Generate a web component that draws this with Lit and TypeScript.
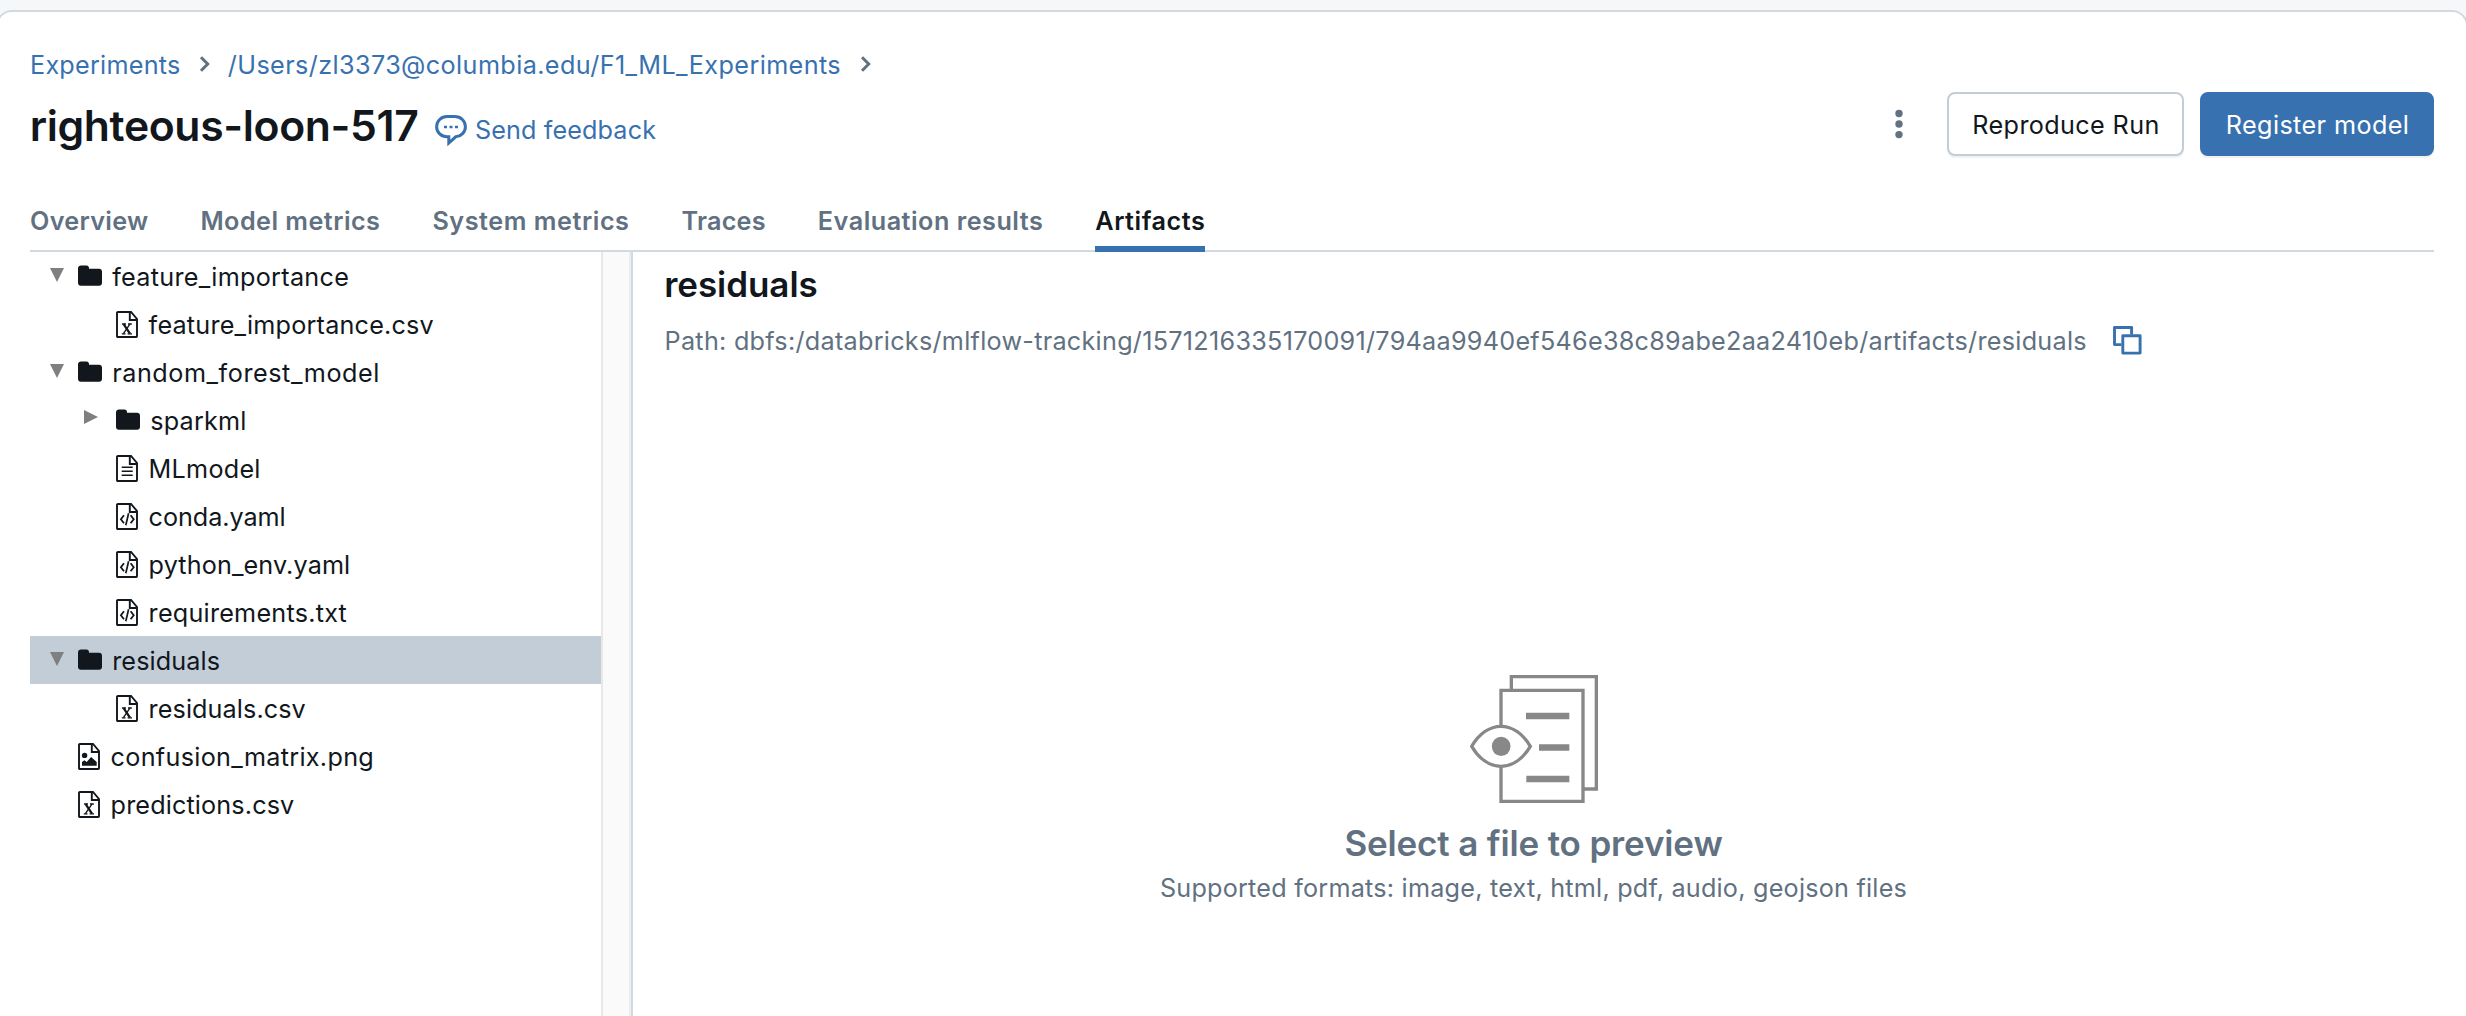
import { LitElement, html, css, svg } from "lit";
import { customElement, property, state } from "lit/decorators.js";

type Kind = "folder" | "sheet" | "text" | "code" | "image";

interface Node {
  name: string;
  kind: Kind;
  depth: number;
  tracking: number;
  open?: boolean;
}

interface Tab {
  label: string;
  tracking: number;
}

const TABS: Tab[] = [
  { label: "Overview", tracking: 0.3 },
  { label: "Model metrics", tracking: 0.467 },
  { label: "System metrics", tracking: 0.55 },
  { label: "Traces", tracking: 0.25 },
  { label: "Evaluation results", tracking: 0.5 },
  { label: "Artifacts", tracking: 0.53 },
];

const NODES: Node[] = [
  { name: "feature_importance", kind: "folder", depth: 0, tracking: 0.281, open: true },
  { name: "feature_importance.csv", kind: "sheet", depth: 1, tracking: 0.198 },
  { name: "random_forest_model", kind: "folder", depth: 0, tracking: 0.55, open: true },
  { name: "sparkml", kind: "folder", depth: 1, tracking: 0.2, open: false },
  { name: "MLmodel", kind: "text", depth: 1, tracking: 0.25 },
  { name: "conda.yaml", kind: "code", depth: 1, tracking: -0.048 },
  { name: "python_env.yaml", kind: "code", depth: 1, tracking: 0.121 },
  { name: "requirements.txt", kind: "code", depth: 1, tracking: 0.23 },
  { name: "residuals", kind: "folder", depth: 0, tracking: 0.1, open: true },
  { name: "residuals.csv", kind: "sheet", depth: 1, tracking: 0.089 },
  { name: "confusion_matrix.png", kind: "image", depth: 0, tracking: 0.3 },
  { name: "predictions.csv", kind: "sheet", depth: 0, tracking: 0.133 },
];

const chevron = html`<svg class="chevron" width="12" height="18" viewBox="0 0 12 18">
  <path d="M2 2.2 8.7 9 2 15.8" fill="none" stroke="currentColor" stroke-width="3" />
</svg>`;

const fileDetail = (kind: Kind) => {
  switch (kind) {
    case "sheet":
      return svg`<path d="M7.6 13.2 14 22.6" stroke-width="2.3"/><path d="M13.9 13.2 7.4 22.6" stroke-width="1.4"/>
        <path d="M6 13H10M12 13h3.8M5.8 22.8h3.7M11.6 22.8h4.4" stroke-width="1.3"/>`;
    case "text":
      return svg`<path d="M5.7 12.2h11M5.7 16.2h11M5.7 20.2h11" stroke-width="1.6"/>`;
    case "code":
      return svg`<path d="M8 12.3 4.9 16.3 8 20.3M14.6 12.3l3.1 4-3.1 4" stroke-width="1.8"/><path d="M12.6 10.2 9.8 22.2" stroke-width="1.7"/>`;
    default:
      return svg`<circle cx="6.6" cy="12.4" r="2.7" fill="currentColor" stroke="none"/>
        <path d="M4 22.8V19l2.4-1.7 2.3 1.8 4.4-5 5.6 4.9v3.8z" fill="currentColor" stroke="none"/>`;
  }
};

@customElement("node-icon")
export class NodeIcon extends LitElement {
  @property() kind: Kind = "folder";

  static styles = css`
    :host {
      display: block;
      color: #11171c;
    }
    .icon {
      display: block;
    }
    .folder {
      margin-top: 13px;
    }
    .file {
      margin-top: 11px;
    }
  `;

  render() {
    if (this.kind === "folder") {
      return html`<svg class="icon folder" width="24" height="21" viewBox="0 0 24 21">
        <path
          d="M3 .4h5.6c1.4 0 2.4 1 2.4 2.4v.9h10.2c1.6 0 2.8 1.2 2.8 2.8v11.6c0 1.6-1.2 2.7-2.8 2.7H2.8C1.2 20.8 0 19.7 0 18.1V3.3C0 1.5 1.3.4 3 .4z"
          fill="currentColor"
        />
      </svg>`;
    }
    return html`<svg class="icon file" width="22" height="27" viewBox="0 0 22 27">
      <g fill="none" stroke="currentColor" stroke-width="1.9">
        <path d="M1.9 1H15l6 7v17.2a.8.8 0 0 1-.8.8H1.8a.8.8 0 0 1-.8-.8V1.9A.9.9 0 0 1 1.9 1z" />
        <path d="M13.8 1v8H21" />
        ${fileDetail(this.kind)}
      </g>
    </svg>`;
  }
}

@customElement("artifact-tree")
export class ArtifactTree extends LitElement {
  @state() private selected = "residuals";

  static styles = css`
    :host {
      display: block;
      color: #11171c;
    }
    .row {
      display: flex;
      align-items: flex-start;
      height: 48px;
      padding-left: 20px;
    }
    .row.nested {
      padding-left: 54px;
    }
    .row.selected {
      background: #c3cdd8;
    }
    .toggle {
      flex: none;
      width: 28px;
      height: 48px;
    }
    .nested .toggle {
      width: 32px;
    }
    .toggle svg {
      display: block;
      margin-top: 16px;
    }
    .nested .toggle svg {
      margin-top: 14px;
    }
    .name {
      line-height: 50px;
      margin-left: 10.6px;
      white-space: nowrap;
    }
    .name.folder {
      margin-left: 10.2px;
    }
  `;

  private toggle(open?: boolean) {
    if (open === undefined) return null;
    return html`<svg width="14" height="14" viewBox="0 0 14 14">
      <path d=${open ? "M0 0h14L7 14z" : "M0 0v14l14-7z"} fill="#7f7f7f" />
    </svg>`;
  }

  render() {
    return NODES.map(
      (n) => html`<div
        class="row ${n.depth ? "nested" : ""} ${n.name === this.selected ? "selected" : ""}"
        @click=${() => (this.selected = n.name)}
      >
        <span class="toggle">${this.toggle(n.open)}</span>
        <node-icon .kind=${n.kind}></node-icon>
        <span class="name ${n.kind}" style="letter-spacing:${n.tracking}px">${n.name}</span>
      </div>`
    );
  }
}

@customElement("app-root")
export class AppRoot extends LitElement {
  @state() private active = "Artifacts";

  static styles = css`
    :host {
      display: block;
      box-sizing: border-box;
      height: 1016px;
      padding-top: 10px;
      overflow: hidden;
      background: #f6f7f9;
      color: #11171c;
      font: 400 25.2px Inter, "Liberation Sans", sans-serif;
    }
    .card {
      box-sizing: border-box;
      display: flex;
      flex-direction: column;
      height: 1040px;
      margin: 0 -2px 0 -4px;
      padding: 33px 32px 0 32px;
      border: 2px solid #d1d9e1;
      border-radius: 16px;
      background: #fff;
    }
    .crumbs {
      display: flex;
      height: 40px;
      line-height: 40px;
      color: #3871b0;
      white-space: nowrap;
    }
    .crumb-root {
      width: 169.3px;
      letter-spacing: 0.24px;
    }
    .crumb-path {
      width: 614.5px;
      margin: 0 18px 0 16.5px;
      letter-spacing: 0.395px;
    }
    .chevron {
      flex: none;
      margin-top: 10px;
      color: #617181;
    }
    .header {
      display: flex;
      align-items: flex-start;
      height: 64px;
      margin-top: 7px;
      white-space: nowrap;
    }
    .title {
      width: 405.3px;
      margin: 0 0 0 -0.3px;
      font-size: 42.7px;
      font-weight: 600;
      line-height: 67px;
      letter-spacing: -0.37px;
    }
    .feedback {
      display: flex;
      flex: 1;
      gap: 7.9px;
      color: #3871b0;
      line-height: 76px;
      letter-spacing: 0.12px;
    }
    .feedback svg {
      margin-top: 23px;
    }
    .kebab {
      margin: 16px 43px 0 0;
    }
    .button {
      box-sizing: border-box;
      height: 64px;
      margin: 0;
      padding: 0;
      border: 2px solid #c3cdd8;
      border-radius: 8px;
      background: #fff;
      box-shadow: 0 2px 1px rgba(17, 23, 28, 0.06);
      color: #11171c;
      font: inherit;
      line-height: 62px;
      text-align: center;
    }
    .reproduce {
      width: 237px;
      padding-left: 1px;
      letter-spacing: 0.367px;
    }
    .register {
      width: 234px;
      margin-left: 16px;
      padding-left: 1px;
      border-color: #3871b0;
      background: #3871b0;
      color: #fff;
      letter-spacing: 0.4px;
    }
    .tabs {
      display: flex;
      gap: 52px;
      height: 60px;
      margin-top: 36px;
      box-shadow: inset 0 -2px #d1d9e1;
      color: #617181;
      font-weight: 600;
      line-height: 58px;
      white-space: nowrap;
    }
    .tab {
      box-sizing: border-box;
      height: 60px;
    }
    .tab.active {
      border-bottom: 6px solid #3871b0;
      color: #11171c;
    }
    .body {
      display: grid;
      grid-template-columns: 571px 32px 1fr;
      flex: 1;
    }
    .track {
      box-sizing: border-box;
      border-left: 2px solid #e8e8e8;
      border-right: 2px solid #d1d9e1;
      background: #fafafa;
      box-shadow: inset -2px 0 #ededed;
    }
    .preview {
      display: flex;
      flex-direction: column;
      padding-top: 4px;
      white-space: nowrap;
    }
    .heading {
      margin: 0 0 0 31.2px;
      font-size: 35px;
      font-weight: 600;
      line-height: 56px;
      letter-spacing: -0.05px;
    }
    .path {
      display: flex;
      margin: 4px 0 0 31.6px;
      color: #617181;
      line-height: 50px;
      letter-spacing: 0.272px;
    }
    .path-text {
      width: 1448.4px;
    }
    .copy {
      margin-top: 10px;
    }
    .empty {
      display: flex;
      flex-direction: column;
      align-items: center;
      margin-top: 309px;
      color: #617181;
    }
    .empty-title {
      margin: 19px 0 0;
      font-size: 35px;
      font-weight: 600;
      line-height: 42px;
      letter-spacing: -0.15px;
    }
    .empty-text {
      line-height: 48px;
      letter-spacing: 0.224px;
    }
  `;

  render() {
    return html`<div class="card">
      <nav class="crumbs">
        <span class="crumb-root">Experiments</span>${chevron}
        <span class="crumb-path">/Users/zl3373@columbia.edu/F1_ML_Experiments</span>${chevron}
      </nav>
      <div class="header">
        <h1 class="title">righteous-loon-517</h1>
        <span class="feedback">
          <svg width="32" height="31" viewBox="0 0 32 31" fill="none" stroke="#3871b0" stroke-width="3">
            <path
              d="M12.1 1.6h7.8c5.8 0 10.5 4.4 10.5 10.1 0 5.4-4.2 9.7-9.700 10.100L13.800 28v-6.200h-1.700C6.300 21.800 1.600 17.400 1.600 11.700S6.300 1.600 12.100 1.600z"
            />
            <path d="M9 12h3M14.500 12h3M20 12h3" stroke-width="2.600" />
          </svg>
          <span>Send feedback</span>
        </span>
        <svg class="kebab" width="10" height="32" viewBox="0 0 10 32" fill="#617181">
          <circle cx="5" cy="5.500" r="3.700" />
          <circle cx="5" cy="16" r="3.700" />
          <circle cx="5" cy="26.600" r="3.700" />
        </svg>
        <button class="button reproduce">Reproduce Run</button>
        <button class="button register">Register model</button>
      </div>
      <div class="tabs">
        ${TABS.map(
          (t) => html`<span
            class="tab ${t.label === this.active ? "active" : ""}"
            style="letter-spacing:${t.tracking}px"
            @click=${() => (this.active = t.label)}
            >${t.label}</span
          >`
        )}
      </div>
      <div class="body">
        <artifact-tree></artifact-tree>
        <div class="track"></div>
        <section class="preview">
          <h2 class="heading">residuals</h2>
          <div class="path">
            <span class="path-text"
              >Path:
              dbfs:/databricks/mlflow-tracking/1571216335170091/794aa9940ef546e38c89abe2aa2410eb/artifacts/residuals</span
            >
            <svg class="copy" width="29" height="29" viewBox="0 0 29 29" fill="none" stroke="#3871b0" stroke-width="2.9">
              <path d="M8.500 18.600H1.500V1.500h17.100v7" stroke-linejoin="round" />
              <path d="M9.800 9.800h17.300v17.300H9.800z" stroke-linejoin="round" />
            </svg>
          </div>
          <div class="empty">
            <svg width="128" height="128" viewBox="87 75 384 384" fill="#fff" stroke="#888" stroke-width="10">
              <path d="M211 80h255v337H211z" />
              <path d="M180 121h246v333H180z" />
              <path d="M92 289c22-37 54-60 88-60s66 23 88 60c-22 37-54 60-88 60s-66-23-88-60z" />
              <ellipse cx="180.500" cy="289" rx="28" ry="29" fill="#888" stroke="none" />
              <path d="M255 198h130M294 292.500h91M256 387h129" stroke-width="19" />
            </svg>
            <h3 class="empty-title">Select a file to preview</h3>
            <span class="empty-text">Supported formats: image, text, html, pdf, audio, geojson files</span>
          </div>
        </section>
      </div>
    </div>`;
  }
}
